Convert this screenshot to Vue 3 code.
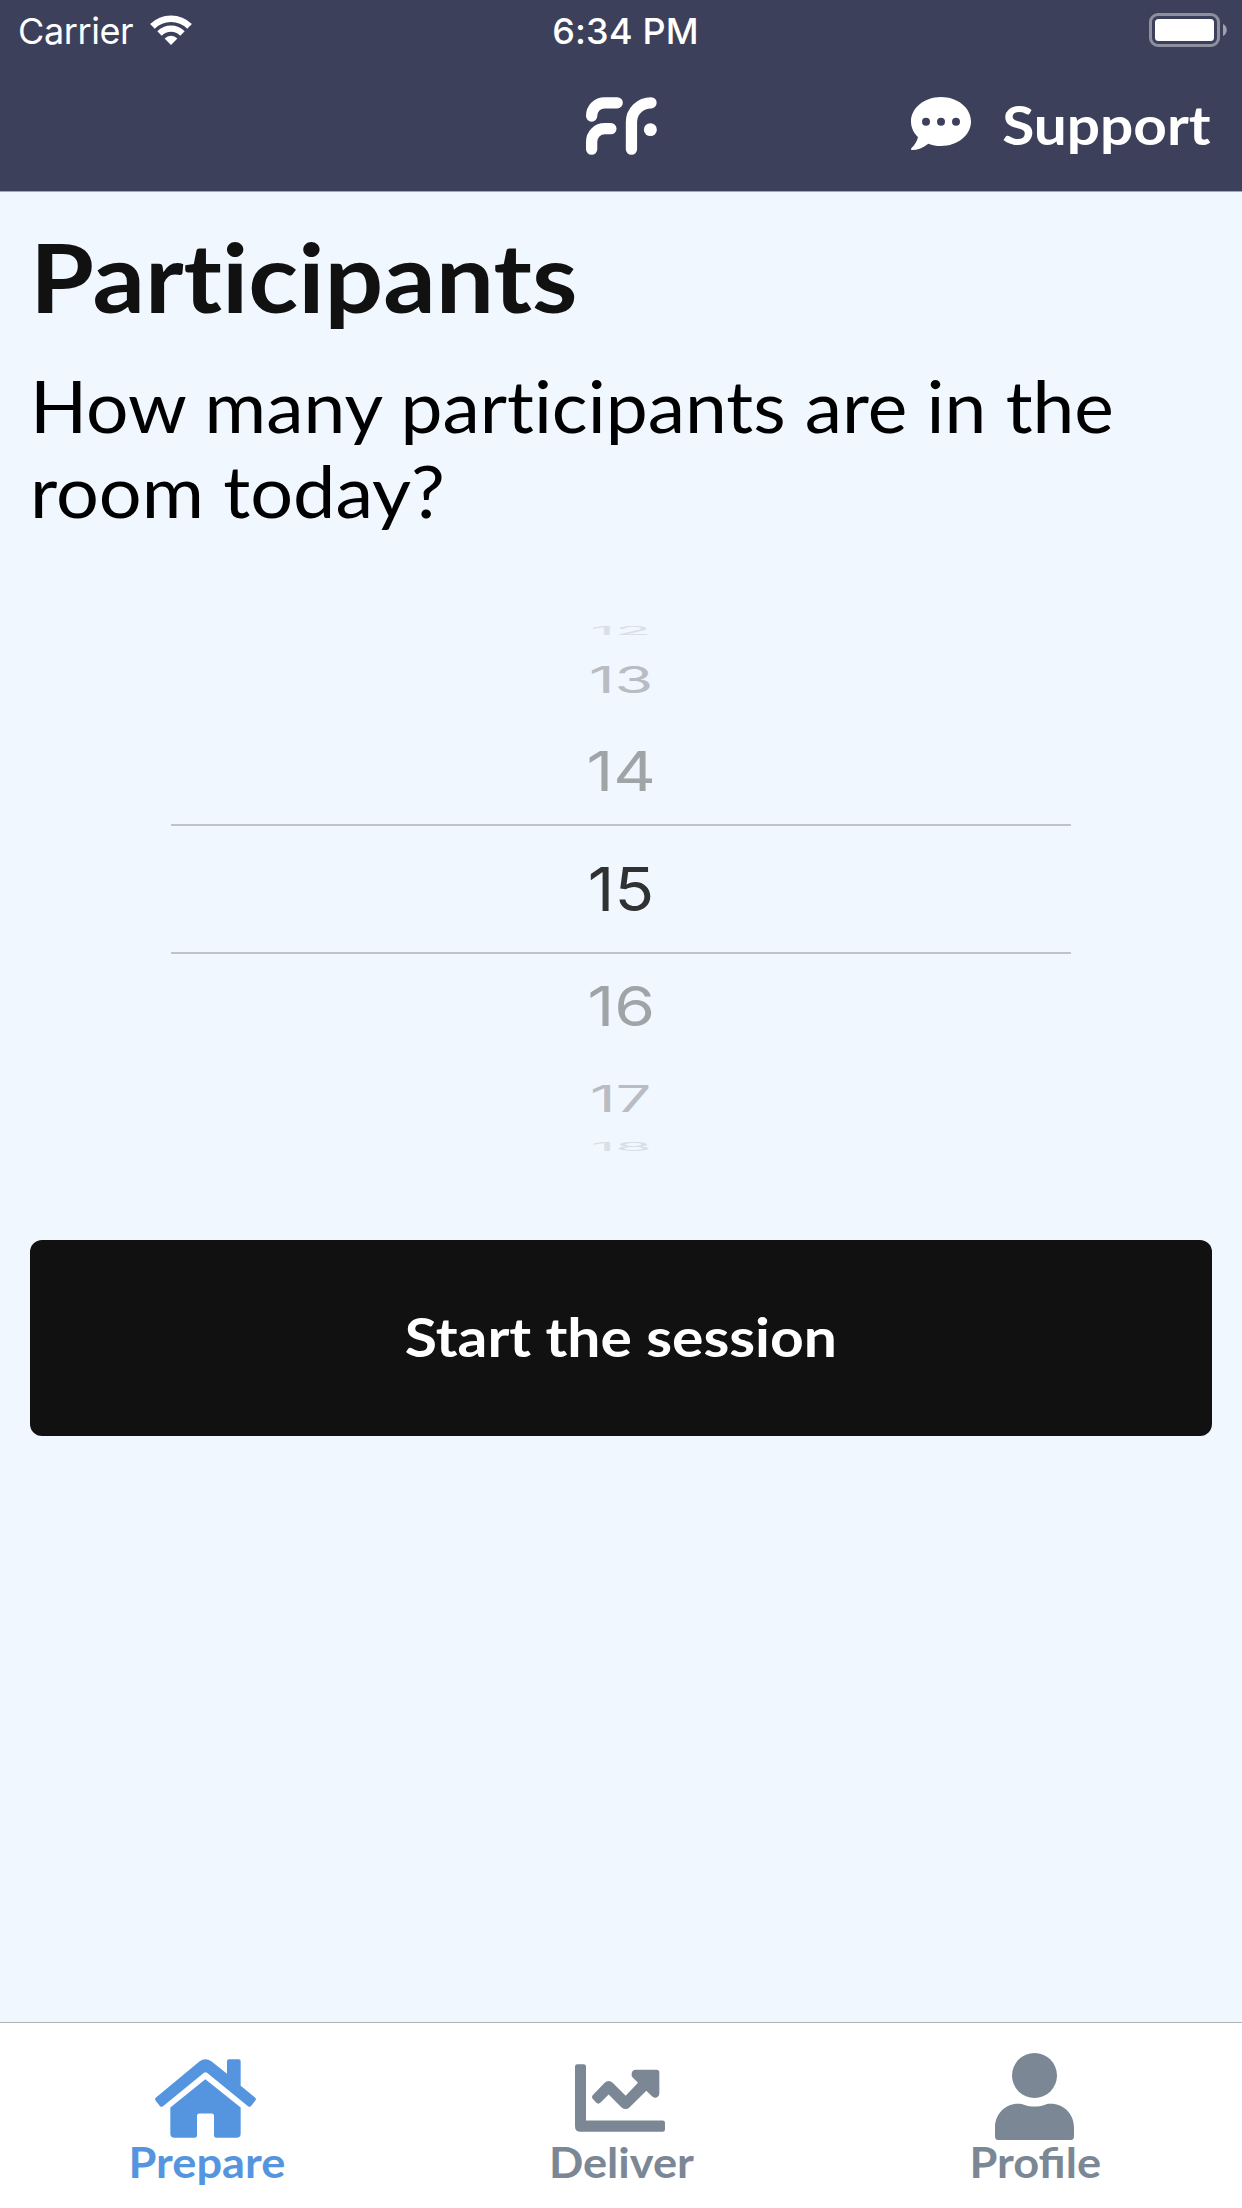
<script setup>
const rows = [
  { n: 12, cls: 'far top' },
  { n: 13, cls: 'mid top' },
  { n: 14, cls: 'near top' },
  { n: 15, cls: 'current' },
  { n: 16, cls: 'near bottom' },
  { n: 17, cls: 'mid bottom' },
  { n: 18, cls: 'far bottom' },
]
</script>

<template>
  <div class="screen">
    <header class="header">
      <div class="status">
        <div class="carrier">
          <span class="carrier-name">Carrier</span>
          <svg class="wifi" viewBox="449 44 128 91">
            <path d="M456.4 78.4A80 80 0 0 1 569.6 78.4" fill="none" stroke="#fff" stroke-width="20" />
            <path d="M478 100A49.5 49.5 0 0 1 548 100" fill="none" stroke="#fff" stroke-width="19" />
            <path d="M513 135L493.500 115.500A27.500 27.500 0 0 1 532.500 115.500Z" fill="#fff" />
          </svg>
        </div>
        <span class="time">6:34 PM</span>
        <svg class="battery" viewBox="0 0 78 34">
          <rect x="1.500" y="1.500" width="68" height="31" rx="7.500" fill="none" stroke="#fff" stroke-opacity=".42" stroke-width="3" />
          <rect x="6" y="6" width="59" height="22" rx="3.500" fill="#fff" />
          <path d="M74 11C79 13 79 21 74 23Z" fill="#fff" fill-opacity=".5" />
        </svg>
      </div>
      <div class="nav">
        <svg class="logo" viewBox="256 291 214 174">
          <g fill="none" stroke="#fff" stroke-width="34" stroke-linecap="round">
            <path d="M273 348C273 325 290 308 313 308H350" />
            <path d="M273 448V426C273 403 290 386 313 386H331" />
            <path d="M393 448V366C393 334 419 308 452 308" />
          </g>
          <circle cx="450" cy="389" r="19.500" fill="#fff" />
        </svg>
        <div class="support">
          <svg class="bubble" viewBox="96 291 180 159">
            <path d="M186 291C236 291 276 324 276 364.500C276 405 236 438 186 438C172 438 160 436 148 431C132 444 116 450 99 450C96 450 95 447 97 445C107 435 114 424 117 411C104 399 96 383 96 364.500C96 324 136 291 186 291Z" fill="#fff" />
            <g fill="#3d405b">
              <circle cx="141" cy="365" r="12" />
              <circle cx="186" cy="365" r="12" />
              <circle cx="231" cy="365" r="12" />
            </g>
          </svg>
          <span class="support-label">Support</span>
        </div>
      </div>
    </header>

    <main class="content">
      <h1 class="title">Participants</h1>
      <p class="question"><span class="line-one">How many participants are in the</span> <span class="line-two">room today?</span></p>
      <div class="picker">
        <div v-for="row in rows" :key="row.n" class="row" :class="row.cls">
          <span>{{ row.n }}</span>
        </div>
      </div>
      <button class="start"><span>Start the session</span></button>
    </main>

    <nav class="tabs">
      <div class="tab active">
        <svg class="home" viewBox="165 147 303 236" fill="currentColor">
          <path d="M168 262L299 153Q316 141 334 153L381 191V153Q381 147 387 147H416Q422 147 422 153V227L465 262Q470 266 466 271L454 287Q449 292 444 288L321 188Q316 184 312 188L189 288Q184 292 180 288L167 272Q163 266 168 262Z" />
          <path d="M316 207L422 292V370Q422 383 409 383H349Q342 383 342 376V317Q342 310 335 310H298Q291 310 291 317V376Q291 383 284 383H224Q211 383 211 370V292Z" />
        </svg>
        <span class="label">Prepare</span>
      </div>
      <div class="tab">
        <svg class="chart" viewBox="165 163 270 203" fill="currentColor">
          <path d="M172 163H191Q198 163 198 170V332H428Q435 332 435 339V359Q435 366 428 366H182Q165 366 165 349V170Q165 163 172 163Z" />
          <path d="M218 256L254 219Q266 208 278 219L317 258L354 219L339 204Q333 197 335 190Q338 180 347 180H410Q418 180 418 188V251Q418 260 410 263Q403 265 396 259L379 243L329 292Q317 303 304 292L266 254L241 279Q235 284 229 279L218 267Q213 261 218 256Z" />
        </svg>
        <span class="label">Deliver</span>
      </div>
      <div class="tab">
        <svg class="person" viewBox="195 129 237 261" fill="currentColor">
          <circle cx="313.500" cy="196.500" r="67.500" />
          <path d="M195 352C195 312 226 281 264 281C272 281 278 282 284 285C303 291 325 291 343 285C349 282 353 281 362 281C401 281 432 312 432 352V378Q432 390 423 390H204Q195 390 195 378Z" />
        </svg>
        <span class="label">Profile</span>
      </div>
    </nav>
  </div>
</template>

<style>
body {
  margin: 0;
}
</style>

<style scoped>
.screen {
  display: flex;
  flex-direction: column;
  width: 1242px;
  height: 2208px;
  background: #f0f7ff;
  font-family: Lato, "Open Sans", sans-serif;
  overflow: hidden;
}
svg {
  display: block;
  flex: none;
}
.header {
  box-sizing: border-box;
  height: 192px;
  background: #3d405b;
  border-bottom: 1px solid #a7a7aa;
  color: #fff;
}
.status {
  display: grid;
  grid-template-columns: 1fr auto 1fr;
  height: 62px;
  padding: 0 15px 0 18px;
  font: 400 36px/63px Inter, sans-serif;
}
.carrier {
  display: flex;
}
.carrier-name {
  width: 132px;
  letter-spacing: -0.4px;
}
.wifi {
  width: 42px;
  height: 30px;
  margin-top: 15px;
}
.time {
  padding-left: 6px;
  font-weight: 500;
  letter-spacing: 0.2px;
}
.battery {
  justify-self: end;
  width: 78px;
  height: 34px;
  margin-top: 13px;
}
.nav {
  display: grid;
  grid-template-columns: 1fr auto 1fr;
  height: 129px;
  padding: 0 31px;
}
.logo {
  grid-column: 2;
  width: 71px;
  height: 58px;
  margin-top: 35px;
}
.support {
  display: flex;
  justify-content: flex-end;
}
.bubble {
  width: 60px;
  height: 53px;
  margin: 35px 51px 0 0;
}
.support-label {
  font-size: 53px;
  font-weight: 700;
  line-height: 125px;
  transform: scaleX(1.105);
  transform-origin: right center;
}
.content {
  display: flex;
  flex: 1;
  flex-direction: column;
  padding: 28px 30px 0;
}
.title,
.question {
  font-variant-ligatures: no-common-ligatures;
}
.title {
  margin: 0;
  color: #111;
  font-size: 96px;
  font-weight: 700;
  line-height: 112px;
  transform: scaleX(1.078);
  transform-origin: left center;
}
.question {
  display: flex;
  flex-direction: column;
  margin: 31px 0 0;
  color: #000;
  font-size: 71px;
  line-height: 85px;
  white-space: nowrap;
}
.line-one {
  transform: scaleX(1.056);
  transform-origin: left center;
}
.line-two {
  transform: scaleX(1.065);
  transform-origin: left center;
}
.picker {
  display: flex;
  flex-direction: column;
  width: 900px;
  margin: 88px auto 0;
  font: 400 61px/1 Inter, sans-serif;
}
.row {
  display: flex;
  align-items: center;
  justify-content: center;
}
.row span {
  flex: none;
}
.current {
  box-sizing: border-box;
  height: 130px;
  border: solid #c0c3cd;
  border-width: 2px 0;
  color: #2f3132;
}
.current span {
  transform: scaleX(1.07);
}
.near {
  height: 104px;
  color: #9fa4a7;
}
.near.top {
  height: 106px;
}
.near span {
  transform: scale(1.08, 0.9);
}
.mid {
  height: 80px;
  color: #babcc4;
}
.mid.top {
  height: 78px;
}
.mid span {
  transform: translateY(1px) scale(1.03, 0.6);
}
.far {
  height: 17px;
  color: #d9dfe6;
}
.far.top {
  height: 19px;
}
.far span {
  transform: scale(0.98, 0.2);
}
.start {
  height: 196px;
  margin: 85px 0 0;
  padding: 0 0 2px;
  border: 0;
  border-radius: 12px;
  background: #111;
  color: #fff;
  font: 700 53px/64px Lato, "Open Sans", sans-serif;
}
.start span {
  display: inline-block;
  transform: scaleX(1.109);
}
.tabs {
  display: grid;
  box-sizing: border-box;
  grid-template-columns: repeat(3, 1fr);
  height: 186px;
  border-top: 1px solid #b0b1b4;
  background: #fff;
}
.tab {
  display: grid;
  grid-template-rows: 112px 60px;
  justify-items: center;
  color: #7b8794;
}
.active {
  color: #5595e0;
}
.home {
  width: 101px;
  height: 79px;
  margin: 36px 3px 0 0;
}
.chart {
  width: 90px;
  height: 68px;
  margin: 41px 2px 0 0;
}
.person {
  width: 79px;
  height: 87px;
  margin: 30px 1px 0 0;
}
.label {
  font-size: 42px;
  font-weight: 700;
  line-height: 55px;
  transform: scaleX(1.075);
}
</style>
